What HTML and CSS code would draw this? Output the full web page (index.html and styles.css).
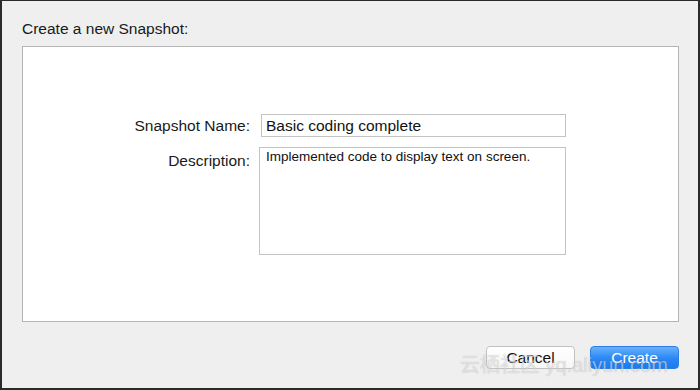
FILE: index.html
```html
<!DOCTYPE html>
<html lang="en">
<head>
  <meta charset="UTF-8" />
  <title>Create a new Snapshot</title>
  <link rel="stylesheet" href="styles.css">
</head>
<body>
  <div class="sheet">
    <h1 class="sheet-title">Create a new Snapshot:</h1>

    <div class="panel">
      <form class="snap-form">
        <label class="field-label" for="snap-name">Snapshot Name:</label>
        <input class="field-input" id="snap-name" type="text" value="Basic coding complete" />

        <label class="field-label desc-label" for="snap-desc">Description:</label>
        <textarea class="field-area" id="snap-desc">Implemented code to display text on screen.</textarea>
      </form>
    </div>

    <div class="actions">
      <button class="btn btn-cancel" type="button">Cancel</button>
      <button class="btn btn-create" type="button">Create</button>
    </div>

    <div class="watermark" aria-hidden="true">云栖社区 yq.aliyun.com</div>
  </div>
</body>
</html>
```

FILE: styles.css
```css
/* Base */
*, *::before, *::after {
  box-sizing: border-box;
}
html, body {
  margin: 0;
  padding: 0;
}
body {
  font-family: "Liberation Sans", Arial, "Noto Sans CJK SC", sans-serif;
  color: #1a1a1a;
  background: #2a2a2a;
}

/* Sheet window */
.sheet {
  position: relative;
  width: 700px;
  height: 390px;
  background: #efefef;
  border: 2px solid #2a2a2a;
  border-top-width: 1px;
  padding: 19px 19px 0 20px;
  overflow: hidden;
}
.sheet-title {
  font-size: 15.5px;
  font-weight: normal;
  margin: 0 0 9px 0;
  line-height: 17px;
}

/* White panel */
.panel {
  height: 276px;
  background: #fff;
  border: 1px solid #b4b4b4;
  padding-top: 67px;
}
.snap-form {
  display: grid;
  grid-template-columns: 227px 306px;
  column-gap: 10px;
  row-gap: 10px;
}
.field-label {
  font-size: 15.5px;
  text-align: right;
  line-height: 23px;
}
.desc-label {
  padding-top: 2px;
}
.field-input,
.field-area {
  font-family: inherit;
  color: #111;
  background: #fff;
  border: 1px solid #c4c4c4;
  border-radius: 0;
  margin: 0;
  outline: none;
}
.field-input {
  height: 23px;
  font-size: 15.5px;
  padding: 0 4px;
  margin-left: 1px;
  width: 305px;
}
.field-area {
  height: 108px;
  font-size: 13.5px;
  padding: 1px 6px;
  resize: none;
  margin-left: -1px;
  width: 307px;
}

/* Buttons */
.actions {
  display: flex;
  justify-content: flex-end;
  gap: 15px;
  margin-top: 24px;
}
.btn {
  font-family: inherit;
  font-size: 15.5px;
  height: 23px;
  width: 89px;
  border-radius: 4px;
  padding: 0;
  line-height: 21px;
}
.btn-cancel {
  background: linear-gradient(#ffffff, #f6f6f6);
  border: 1px solid #c2c2c2;
  color: #111;
}
.btn-create {
  background: linear-gradient(#68b1fb, #2a87f4 55%, #1a7cf0);
  border: 1px solid #2a7fe6;
  color: #fff;
}

/* Watermark overlay */
.watermark {
  position: absolute;
  left: 458px;
  top: 348px;
  font-size: 20px;
  color: rgba(255, 255, 255, 0.55);
  text-shadow: 0 0 1px rgba(0, 0, 0, 0.25);
  white-space: nowrap;
  pointer-events: none;
}
```
